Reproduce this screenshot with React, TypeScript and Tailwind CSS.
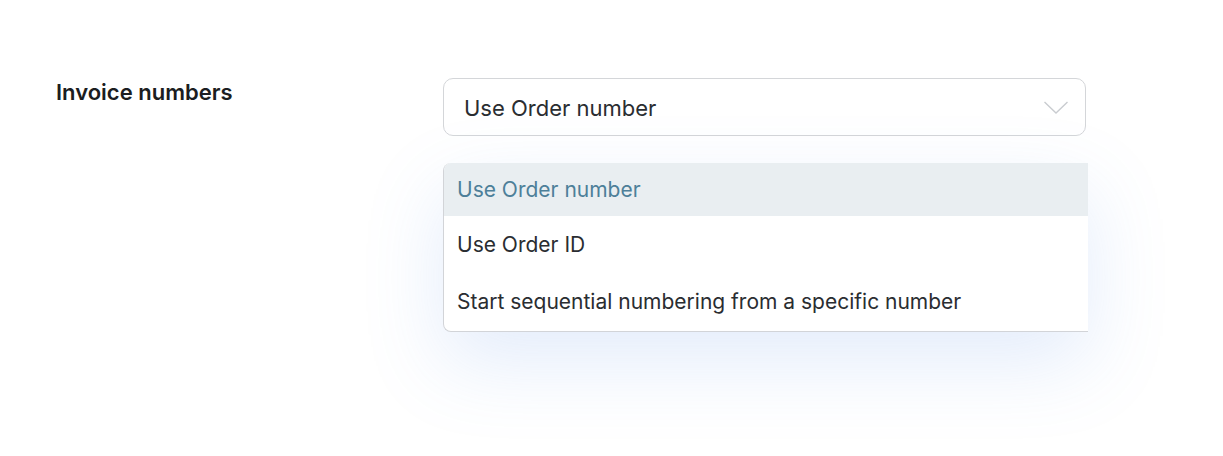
import React from "react";

export default function App() {
  const font = { fontFamily: "Inter, 'Noto Sans', sans-serif" };
  return (
    <div className="w-[1223px] h-[456px] bg-white flex pl-[56px] pt-[78px]" style={font}>
      <div className="w-[387px] pt-[0px] text-[22px] leading-[28px] font-semibold text-[#1b1d21]">
        Invoice numbers
      </div>
      <div className="w-[645px] flex flex-col">
        <div className="w-[643px] h-[58px] rounded-[10px] border border-[#d4d6d9] bg-white flex items-center justify-between pl-[20px] pr-[16px]">
          <span className="text-[22px] pt-[3px] text-[#2a2d31]">Use Order number</span>
          <svg width="26" height="16" viewBox="0 0 26 16" fill="none">
            <path d="M1.5 3 L13 14 L24.5 3" stroke="#c9ccd0" strokeWidth="1.4" />
          </svg>
        </div>
        <div className="mt-[27px] w-[645px] bg-white rounded-l-[8px] border-l border-b border-[#d2d4d8] overflow-hidden shadow-[0_30px_80px_rgba(90,140,230,0.17)] flex flex-col">
          <div className="h-[53px] bg-[#e9eef1] flex items-center pl-[13px] text-[21px] text-[#4d7f99]">
            Use Order number
          </div>
          <div className="h-[57px] flex items-center pl-[13px] text-[21px] text-[#2a2d31]">
            Use Order ID
          </div>
          <div className="h-[58px] flex items-center pl-[13px] text-[21px] text-[#2a2d31]">
            Start sequential numbering from a specific number
          </div>
        </div>
      </div>
    </div>
  );
}
